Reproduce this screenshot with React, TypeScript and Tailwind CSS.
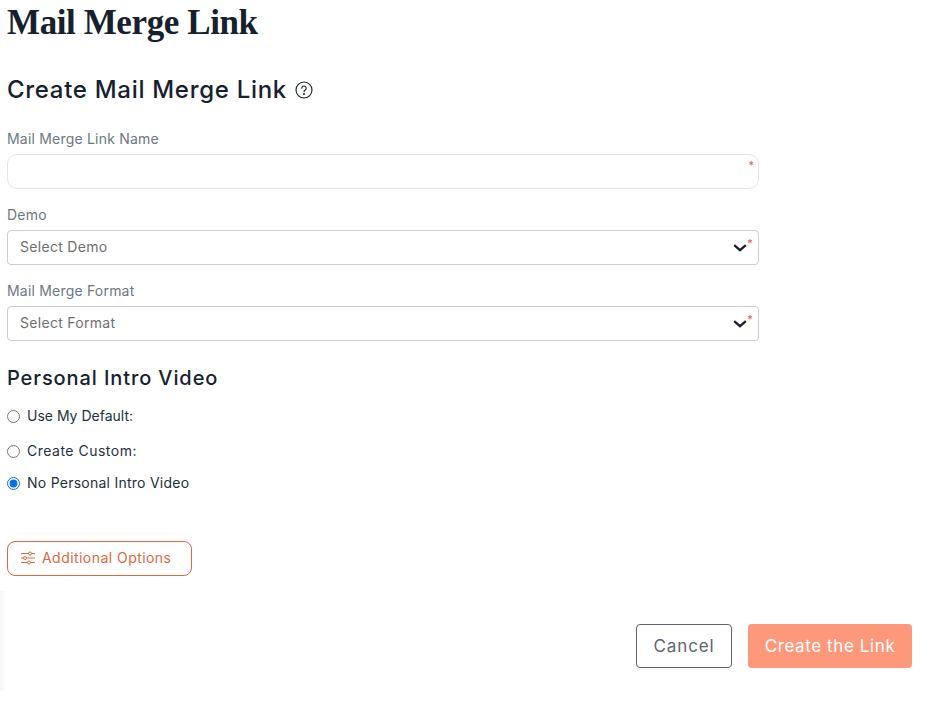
const Star = ({ className }: { className: string }) => (
	<span className={`absolute text-[11px] leading-none text-[#e0555f] ${className}`}>*</span>
);

const Chevron = () => (
	<svg className="absolute right-[11px] top-[13px] h-[8px] w-[14px]" viewBox="0 0 14 8" fill="none">
		<path d="M1.2 1.2 7 6.2l5.8-5" stroke="#17212e" strokeWidth="2.2" />
	</svg>
);

const SelectBox = ({ label, placeholder }: { label: string; placeholder: string }) => (
	<div className="mt-[16px]">
		<div className="text-[14px] leading-[20px] tracking-[0.2px] text-[#6b7785]">{label}</div>
		<div className="relative mt-[5px] flex h-[35px] w-[752px] items-center rounded-[4px] border border-[#cfcdca] pb-[2px] pl-[12px] text-[14px] tracking-[0.3px] text-[#6f6f6f]">
			{placeholder}
			<Chevron />
			<Star className="right-[5px] top-[7px]" />
		</div>
	</div>
);

const Radio = ({ label, checked, className }: { label: string; checked?: boolean; className: string }) => (
	<label className={`flex h-[20px] items-center text-[14px] text-[#243141] ${className}`}>
		<input type="radio" name="intro" defaultChecked={checked} className="m-0 mt-[2px] h-[13px] w-[13px] accent-[#0b6fe8]" />
		<span className="ml-[7px]">{label}</span>
	</label>
);

export default function App() {
	return (
		<div className="relative h-[701px] w-[934px] overflow-hidden bg-white pl-[7px] font-['Inter',sans-serif]">
			<h1 className="pt-[3px] font-['Liberation_Serif',serif] text-[35px] font-bold leading-[40px] tracking-[-0.4px] text-[#17212e]">
				Mail Merge Link
			</h1>
			<div className="mt-[31px] flex items-center">
				<h2 className="text-[24px] font-medium leading-[32px] tracking-[0.7px] text-[#17212e]">Create Mail Merge Link</h2>
				<svg className="ml-[8px] h-[18px] w-[18px]" viewBox="0 0 18 18" fill="none" stroke="#17212e" strokeWidth="1.1">
					<circle cx="9" cy="9" r="8" />
					<path d="M6.8 7.2a2.2 2.2 0 1 1 3.4 1.8c-.8.5-1.2.9-1.2 1.8" strokeLinecap="round" />
					<circle cx="9" cy="13" r=".4" />
				</svg>
			</div>

			<div className="mt-[23px]">
				<div className="text-[14px] leading-[20px] tracking-[0.2px] text-[#6b7785]">Mail Merge Link Name</div>
				<div className="relative mt-[5px] h-[35px] w-[752px] rounded-[10px] border border-[#e5e5e7]">
					<Star className="right-[4px] top-[5px]" />
				</div>
			</div>
			<SelectBox label="Demo" placeholder="Select Demo" />
			<SelectBox label="Mail Merge Format" placeholder="Select Format" />

			<h3 className="mt-[23px] text-[20px] font-medium leading-[28px] tracking-[0.9px] text-[#17212e]">Personal Intro Video</h3>
			<Radio label="Use My Default:" className="mt-[13px] tracking-[0px]" />
			<Radio label="Create Custom:" className="mt-[15px] tracking-[0.5px]" />
			<Radio label="No Personal Intro Video" checked className="mt-[12px] tracking-[0.25px]" />

			<button className="mt-[49px] flex h-[35px] w-[185px] items-center rounded-[8px] border border-[#e0683f] pb-[2px] pl-[13px] text-[14px] tracking-[0.45px] text-[#e0683f]">
				<svg className="mr-[7px] h-[14px] w-[14px]" viewBox="0 0 14 14" fill="none" stroke="#e0683f" strokeWidth="1">
					<path d="M0 2.5h7.5M10.5 2.5H14M0 7h2.5M5.5 7H14M0 11.5h6.5M9.5 11.5H14" />
					<circle cx="9" cy="2.5" r="1.5" />
					<circle cx="4" cy="7" r="1.5" />
					<circle cx="8" cy="11.5" r="1.5" />
				</svg>
				Additional Options
			</button>

			<div className="mt-[48px] flex w-[905px] justify-end gap-[16px]">
				<button className="h-[44px] w-[96px] rounded-[4px] border border-[#5f6570] pt-[1px] text-[17px] tracking-[0.9px] text-[#5f6570]">Cancel</button>
				<button className="h-[44px] w-[164px] rounded-[4px] bg-[#fd987b] pt-[1px] text-[17px] tracking-[0.6px] text-white">Create the Link</button>
			</div>

			<div className="absolute bottom-[10px] left-0 h-[100px] w-[7px] bg-gradient-to-r from-[#f6f6f6] to-white" />
		</div>
	);
}
